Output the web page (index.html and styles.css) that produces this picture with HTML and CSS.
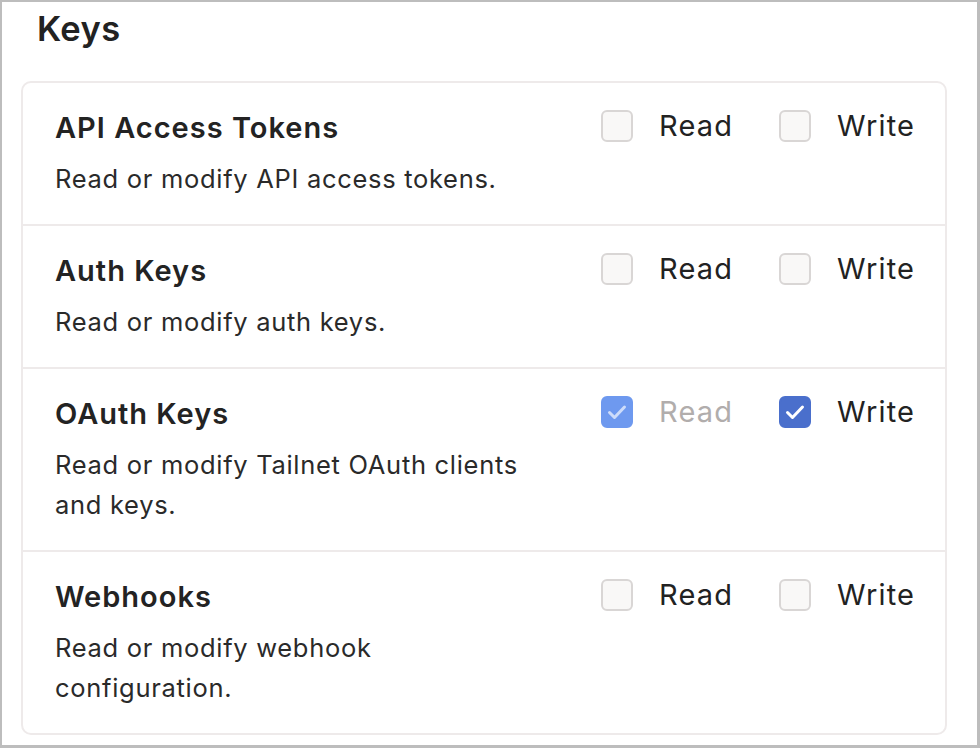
FILE: index.html
```html
<!DOCTYPE html>
<html lang="en">
<head>
<meta charset="utf-8">
<title>Keys</title>
<link rel="stylesheet" href="styles.css">
</head>
<body>
<div class="frame">
  <h2 class="heading">Keys</h2>
  <div class="card">
    <div class="row">
      <div class="info">
        <div class="title">API Access Tokens</div>
        <div class="desc">Read or modify API access tokens.</div>
      </div>
      <div class="perms">
        <label class="perm"><span class="box"></span><span class="label">Read</span></label>
        <label class="perm"><span class="box"></span><span class="label">Write</span></label>
      </div>
    </div>
    <div class="row">
      <div class="info">
        <div class="title">Auth Keys</div>
        <div class="desc">Read or modify auth keys.</div>
      </div>
      <div class="perms">
        <label class="perm"><span class="box"></span><span class="label">Read</span></label>
        <label class="perm"><span class="box"></span><span class="label">Write</span></label>
      </div>
    </div>
    <div class="row">
      <div class="info">
        <div class="title">OAuth Keys</div>
        <div class="desc">Read or modify Tailnet OAuth clients and keys.</div>
      </div>
      <div class="perms">
        <label class="perm disabled"><span class="box checked"><svg viewBox="0 0 32 32" width="32" height="32"><path d="M8.5 16.5l5 5L23.5 11" fill="none" stroke="currentColor" stroke-width="3" stroke-linecap="round" stroke-linejoin="round"/></svg></span><span class="label">Read</span></label>
        <label class="perm"><span class="box checked"><svg viewBox="0 0 32 32" width="32" height="32"><path d="M8.5 16.5l5 5L23.5 11" fill="none" stroke="currentColor" stroke-width="3" stroke-linecap="round" stroke-linejoin="round"/></svg></span><span class="label">Write</span></label>
      </div>
    </div>
    <div class="row">
      <div class="info">
        <div class="title">Webhooks</div>
        <div class="desc">Read or modify webhook configuration.</div>
      </div>
      <div class="perms">
        <label class="perm"><span class="box"></span><span class="label">Read</span></label>
        <label class="perm"><span class="box"></span><span class="label">Write</span></label>
      </div>
    </div>
  </div>
</div>
</body>
</html>
```

FILE: styles.css
```css
* { box-sizing: border-box; }
html, body { margin: 0; padding: 0; background: #fff; }
body {
  font-family: Inter, "Noto Sans", "Liberation Sans", sans-serif;
  color: #232323;
}
.frame {
  width: 980px;
  height: 748px;
  border: 2px solid #bdbdbd;
  border-right-width: 3px;
  border-bottom-width: 3px;
  padding: 7px 30px 0 19px;
  overflow: hidden;
}
.heading {
  margin: 0 0 32px 16px;
  font-size: 34.5px;
  line-height: 40px;
  font-weight: 600;
  color: #222;
  letter-spacing: 0.4px;
}
.card {
  border: 2px solid #eeeaea;
  border-radius: 10px;
  background: #fff;
}
.row {
  display: flex;
  justify-content: space-between;
  align-items: flex-start;
  padding: 25px 32px 25px 32px;
  border-top: 2px solid #eeeaea;
}
.row:first-child { border-top: none; }
.info { max-width: 480px; }
.title {
  font-size: 29px;
  line-height: 40px;
  font-weight: 600;
  color: #232323;
  letter-spacing: 1px;
}
.desc {
  margin-top: 11px;
  font-size: 25.5px;
  line-height: 40px;
  color: #2a2a2a;
  letter-spacing: 0.7px;
}
.perms {
  display: flex;
  gap: 47px;
  margin-top: -2px;
  margin-right: -1px;
}
.perm {
  display: flex;
  align-items: center;
  gap: 26px;
  height: 40px;
}
.box {
  width: 32px;
  height: 32px;
  border: 2px solid #d9d6d5;
  border-radius: 6px;
  background: #f9f8f7;
  display: flex;
  align-items: center;
  justify-content: center;
}
.box.checked {
  border-color: #4a6fcc;
  background: #4a6fcc;
  color: #fff;
}
.box.checked svg { display: block; flex: none; margin: -2px; }
.disabled .box.checked {
  border-color: #6e99ef;
  background: #6e99ef;
  color: #cddcfa;
}
.label {
  font-size: 29px;
  line-height: 40px;
  color: #222;
  letter-spacing: 1.2px;
  margin-right: -1.2px;
}
.disabled .label { color: #b1adac; }
```
